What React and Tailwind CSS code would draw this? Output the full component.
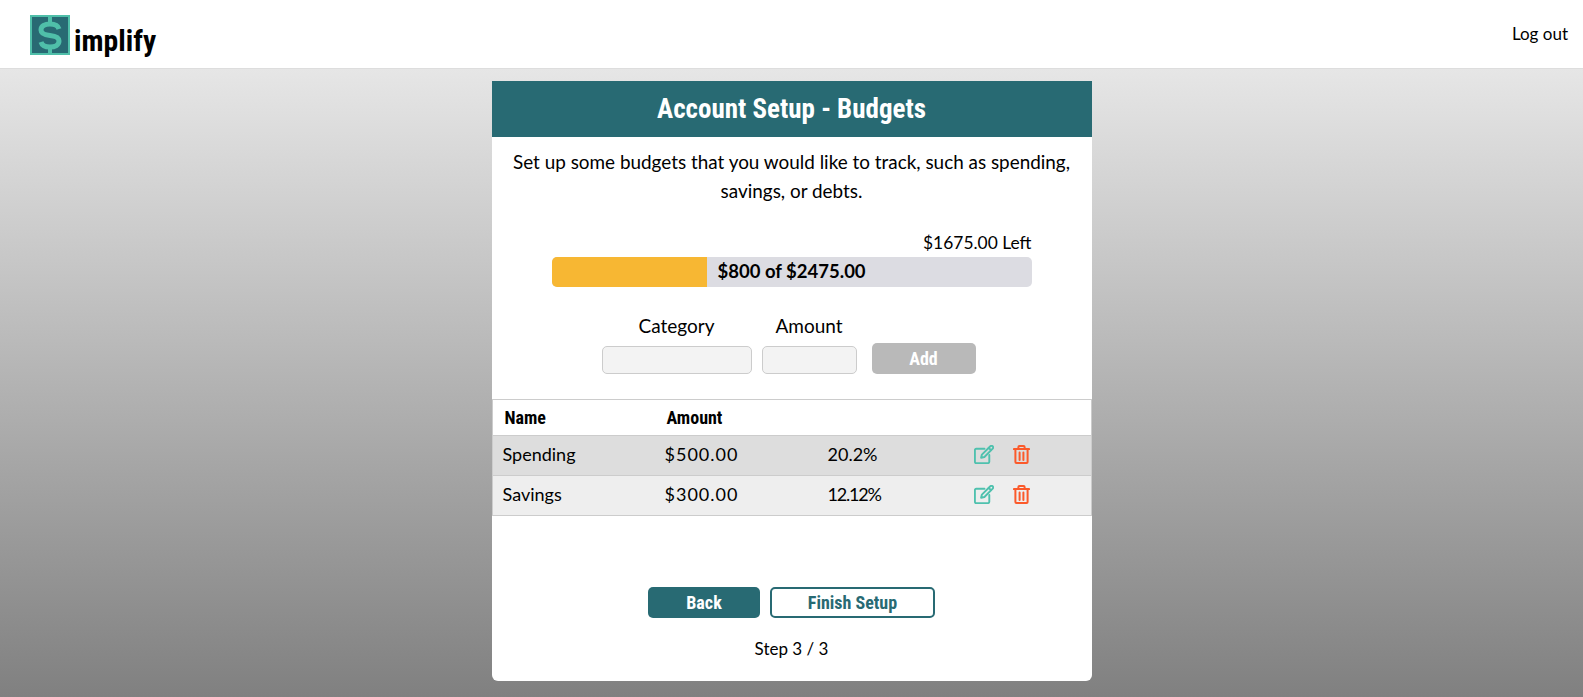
import React from "react";

const cond = "font-['Roboto','Liberation_Sans_Narrow',sans-serif] [font-stretch:75%]";

function EditIcon() {
  return (
    <svg width="20" height="19" viewBox="0 0 20 19" fill="none" stroke="#4fc1ae" strokeWidth="1.9" strokeLinejoin="round" strokeLinecap="round">
      <path d="M10.500 3.700H2.200A1.300 1.300 0 0 0 .9 5v11.800a1.300 1.300 0 0 0 1.300 1.300H14a1.300 1.300 0 0 0 1.300-1.300V10" />
      <path d="M16.300 1.300a1.600 1.600 0 0 1 2.400 2.300L10.400 12l-3.300.8.8-3.200z" />
      <path d="M14.800 3l2.200 2.200" />
    </svg>
  );
}

function TrashIcon() {
  return (
    <svg width="17" height="19" viewBox="0 0 17 19" fill="none" stroke="#fb5a2b" strokeWidth="2" strokeLinejoin="round" strokeLinecap="round">
      <path d="M.9 4.100h15.200" />
      <path d="M5.400 4V2a1 1 0 0 1 1-1h4.200a1 1 0 0 1 1 1v2" />
      <path d="M2.400 4.100v12.900a1 1 0 0 0 1 1h10.200a1 1 0 0 0 1-1V4.100" />
      <path d="M6.600 7.500v7.500M10.400 7.500v7.500" />
    </svg>
  );
}

function Row({ name, amount, pct, bg, pctClass }) {
  return (
    <div className={`flex items-center h-10 border-b border-[#cccccc] text-[18px] ${bg}`}>
      <div className="w-[162px] pl-[10px] pb-[2px]">{name}</div>
      <div className="w-[162px] pl-[10px] pb-[2px] tracking-[1px]">{amount}</div>
      <div className={`w-[157px] pl-[11px] pb-[2px] ${pctClass}`}>{pct}</div>
      <div className="flex items-center gap-[19px] pb-[3px]">
        <EditIcon />
        <TrashIcon />
      </div>
    </div>
  );
}

export default function App() {
  return (
    <div className="h-[697px] overflow-hidden flex flex-col font-['Lato',sans-serif] text-black bg-white">
      <header className="h-[69px] shrink-0 flex items-start justify-between border-b border-[#dddddd] pl-[30px] pr-[15px]">
        <div className="flex items-end mt-[15px]">
          <svg width="40" height="40" viewBox="0 0 40 40">
            <rect x="1" y="1" width="38" height="38" fill="#286a73" stroke="#4fbfa9" strokeWidth="2" />
            <path d="M29 14C28 10.500 25 9 20 9c-5 0-9 2-9 6 0 4 4 5 9 5.500 5 .5 9 1.500 9 5.500 0 4-4 6-9 6-5 0-8-1.500-9-5" fill="none" stroke="#4fbfa9" strokeWidth="5" />
            <path d="M20 2v7M20 32v6" stroke="#4fbfa9" strokeWidth="4" />
          </svg>
          <span className={`${cond} text-[29.700px] leading-[36px] font-bold ml-[4px] mb-[-4px]`}>implify</span>
        </div>
        <div className="mt-[22px] text-[17px] leading-6">Log out</div>
      </header>
      <main className="flex-1 flex justify-center bg-linear-to-b/srgb from-[#e6e6e6] to-[#808080] pt-[12px]">
        <div className="w-[600px] h-[600px] bg-white rounded-b-[6px] flex flex-col items-stretch">
          <div className={`${cond} h-[56px] shrink-0 bg-[#286a73] text-white text-[27px] font-bold flex items-center justify-center`}>
            Account Setup - Budgets
          </div>
          <p className="mt-[10px] px-[10px] text-center text-[18.900px] leading-[29px]">
            Set up some budgets that you would like to track, such as spending, savings, or debts.
          </p>
          <div className="mt-[25px] px-[60px]">
            <div className="text-right text-[17.400px] leading-[24px] pt-[1px] mb-[-1px]">$1675.00 Left</div>
            <div className="mt-[3px] h-[30px] flex rounded-[5px] overflow-hidden bg-[#dcdce2]">
              <div className="w-[155px] bg-[#f7b733]" />
              <div className="pl-[11px] flex items-center text-[18.500px] font-bold">$800 of $2475.00</div>
            </div>
          </div>
          <div className="mt-[25px] pr-[6px] flex justify-center items-end">
            <div className="flex flex-col items-center w-[150px]">
              <label className="text-[19px] leading-[28px] mb-[6px]">Category</label>
              <div className="w-[150px] h-[28px] bg-[#f3f3f3] border border-[#cccccc] rounded-[5px]" />
            </div>
            <div className="flex flex-col items-center w-[95px] ml-[10px]">
              <label className="text-[19px] leading-[28px] mb-[6px]">Amount</label>
              <div className="w-[95px] h-[28px] bg-[#f3f3f3] border border-[#cccccc] rounded-[5px]" />
            </div>
            <div className={`${cond} ml-[15px] w-[104px] h-[31px] rounded-[5px] bg-[#b9b9b9] text-white font-bold text-[18px] flex items-center justify-center`}>
              Add
            </div>
          </div>
          <div className="mt-[25px] border-t border-l border-r border-[#cccccc]">
            <div className={`${cond} flex items-center h-[36px] border-b border-[#cccccc] text-[18px] font-bold`}>
              <div className="w-[174px] pl-[12px]">Name</div>
              <div>Amount</div>
            </div>
            <Row name="Spending" amount="$500.00" pct="20.2%" bg="bg-[#dddddd]" pctClass="" />
            <Row name="Savings" amount="$300.00" pct="12.12%" bg="bg-[#eeeeee]" pctClass="tracking-[-1.200px]" />
          </div>
          <div className="mt-[71px] flex justify-center gap-[10px]">
            <div className={`${cond} w-[112px] h-[31px] rounded-[5px] bg-[#286a73] text-white font-bold text-[18px] flex items-center justify-center`}>
              Back
            </div>
            <div className={`${cond} w-[165px] h-[31px] rounded-[5px] border-2 border-[#286a73] text-[#286a73] font-bold text-[18px] flex items-center justify-center`}>
              Finish Setup
            </div>
          </div>
          <div className="mt-[19px] text-center text-[17px] leading-[24px]">Step 3 / 3</div>
        </div>
      </main>
    </div>
  );
}
